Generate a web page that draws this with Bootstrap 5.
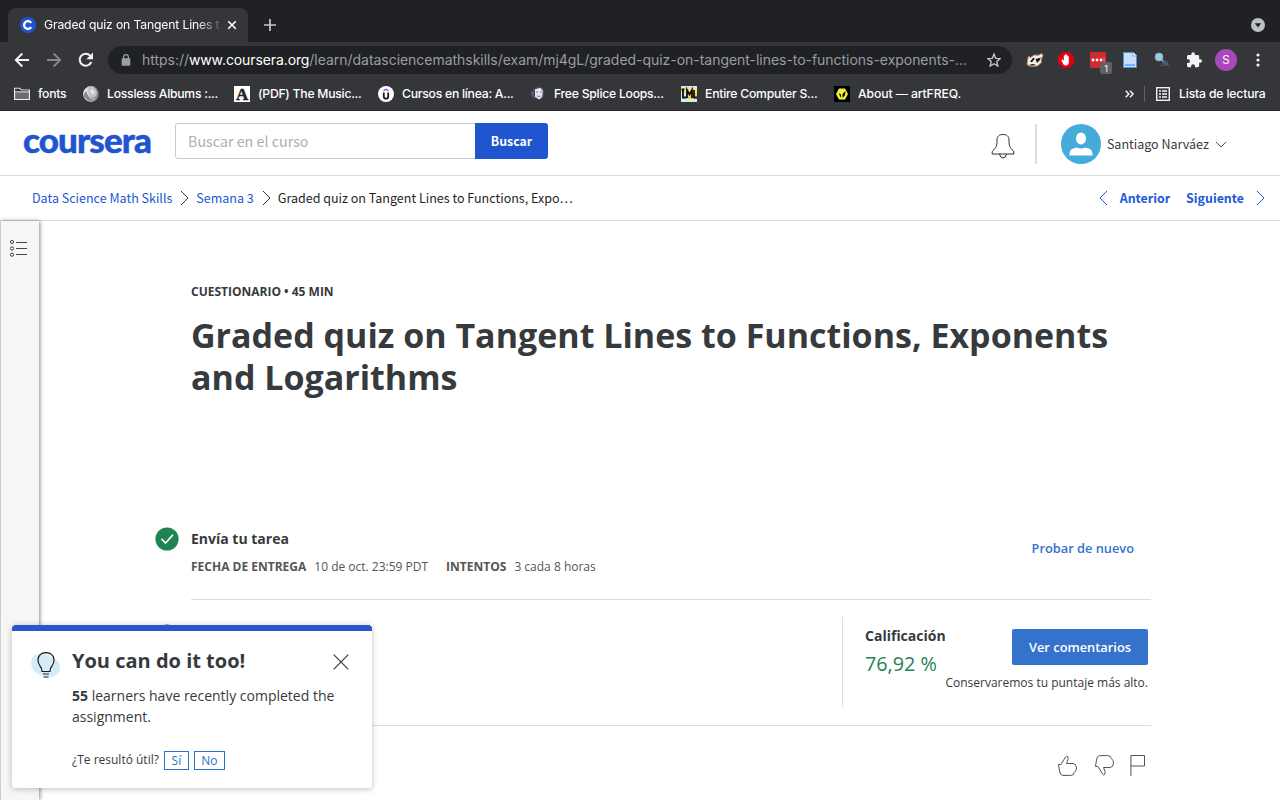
<!DOCTYPE html>
<html lang="es">
<head>
<meta charset="utf-8">
<meta name="viewport" content="width=device-width, initial-scale=1">
<title>Graded quiz on Tangent Lines to Functions, Exponents and Logarithms</title>
<link href="https://cdn.jsdelivr.net/npm/bootstrap@5.3.0/dist/css/bootstrap.min.css" rel="stylesheet">
<style>
body{height:800px;overflow:hidden;background:#fff;color:#373a3c;font-family:"Open Sans",sans-serif;font-size:14px;line-height:20px}
svg{display:block;flex:none}
span,a,strong{white-space:nowrap}
a{text-decoration:none}
/* browser chrome */
.chrome{height:111px;background:#35363a;color:#fff;font-family:Inter,"Liberation Sans",sans-serif;border-bottom:1px solid #242528}
.strip{height:42px;background:#202124;padding:8px 0 0 8px}
.tab{width:240px;height:34px;background:#35363a;border-radius:8px 8px 0 0;padding:0 10px 0 12px;font-size:12.2px;letter-spacing:-.15px}
.tab-name{width:177px;margin-left:8px;-webkit-mask-image:linear-gradient(90deg,#000 86%,transparent 102%)}
.tools{height:36px;padding-left:14px}
.omni{width:904px;height:28px;border-radius:14px;background:#202124;margin-left:13px;padding:0 11px 0 13px;font-size:14px;letter-spacing:-.035px;color:#9a9da1}
.omni b{color:#fff;font-weight:400;letter-spacing:-.1px}
.marks{height:32px;font-size:12.2px;font-weight:500;letter-spacing:-.25px}
.marks-grid{display:grid;grid-template-columns:69px 151px 144px 152px 151px 153px 140px;padding-left:14px}
.mk{gap:8px}
/* site header */
.src{font-family:"Noto Sans CJK SC",sans-serif}
.site{height:65px;border-bottom:1px solid #dedede;padding-left:23px}
.brandname{font-family:Lato,sans-serif;font-weight:900;font-size:35px;line-height:36px;letter-spacing:-.87px;color:#1f55cf;width:129px;-webkit-text-stroke:.5px #1f55cf}
.search{width:373px;height:36px;margin:12px 0 0 23px}
.search .form-control{border:1px solid #c7cad4;border-radius:3px 0 0 3px;font-size:14.3px;padding:0 12px 2px;height:36px;color:#b0b0b0}
.search .form-control::placeholder{color:#aeaeae}
.search .btn{width:73px;height:36px;background:#1f55cf;border:0;border-radius:0 3px 3px 0;padding:1px 0 0;font-size:12.3px;font-weight:700;color:#fff}
.crumbs{height:45px;border-bottom:1px solid #dedede;padding:0 15px 0 32px;font-size:12.53px;color:#1f1f1f}
.crumbs a{color:#2059d6}
/* page */
.rail{width:39px;height:579px;background:#f6f6f6;border-left:1px solid #cfcfcf;box-shadow:1px 0 4px rgba(0,0,0,.45);padding:18px 0 0 9px}
.main{margin-left:152px;width:960px}
h1{font-size:34px;line-height:42px;font-weight:700;margin:0;color:#373a3c}
.rule{height:1px;background:#dedede}
.meta{font-size:12px;line-height:18px;color:#555}
.stepmark{left:-36px;top:0}
.grade{border-left:1px solid #dedede;height:90px;padding-left:22px;width:309px}
.pct{font-size:19.8px;line-height:26px;color:#1f8354}
.btn-see{width:136px;height:36px;background:#3572cb;border:0;border-radius:2px;padding:1px 0 0;font-size:12.85px;font-weight:600;color:#fff}
.nudge{left:12px;top:625px;width:360px;height:163px;border-top:6px solid #2a55cb;border-radius:4px;background:#fff;box-shadow:0 1px 6px rgba(0,0,0,.25)}
.yn{border:1px solid #2a73cc;color:#2a73cc;font-size:12px;line-height:17px;height:19px;background:#fff;padding:0;text-align:center}
</style>
</head>
<body>
<header class="chrome">
  <div class="strip d-flex align-items-center">
    <div class="tab d-flex align-items-center">
      <svg width="16" height="16" viewBox="0 0 16 16"><circle cx="8" cy="8" r="8" fill="#1f55cf"/><path d="M11.2 5.8A3.9 3.9 0 1 0 11.2 10.2" fill="none" stroke="#fff" stroke-width="2.3"/></svg>
      <div class="tab-name"><span>Graded quiz on Tangent Lines t</span></div>
      <svg class="ms-auto" width="12" height="12" viewBox="0 0 12 12"><path d="M2.2 2.2l7.6 7.6M9.8 2.2L2.2 9.8" stroke="#fff" stroke-width="1.6"/></svg>
    </div>
    <svg class="ms-3" width="12" height="12" viewBox="0 0 12 12"><path d="M6 0v12M0 6h12" stroke="#c6c8cb" stroke-width="1.7"/></svg>
    <svg class="ms-auto" style="margin-right:15px" width="14" height="14" viewBox="0 0 14 14"><circle cx="7" cy="7" r="7" fill="#bdc1c6"/><path d="M3.8 5.2h6.4L7 9.6z" fill="#202124"/></svg>
  </div>
  <div class="tools d-flex align-items-center">
    <svg width="16" height="16" viewBox="0 0 16 16" fill="none" stroke="#f1f3f4" stroke-width="1.9"><path d="M15 8H2.5M8.300 1.500L1.800 8l6.500 6.500"/></svg>
    <svg style="margin-left:16px" width="16" height="16" viewBox="0 0 16 16" fill="none" stroke="#87888b" stroke-width="1.8"><path d="M1 8h12.500M7.700 1.500L14.200 8l-6.500 6.500"/></svg>
    <svg style="margin-left:15px" width="18" height="16" viewBox="0 0 18 16"><path d="M14.300 10A6 6 0 1 1 13.200 3.700L14.500 5" fill="none" stroke="#f1f3f4" stroke-width="2"/><path d="M16 .5v6.700H9.300z" fill="#f1f3f4"/></svg>
    <div class="omni d-flex align-items-center">
      <svg width="10" height="12" viewBox="0 0 10 12"><rect x=".7" y="4.200" width="8.600" height="7.500" rx="1" fill="#9a9fa5"/><path d="M2.600 5V3a2.400 2.400 0 0 1 4.800 0v2" fill="none" stroke="#9a9fa5" stroke-width="1.300"/></svg>
      <span style="margin-left:11px">https://<b>www.coursera.org</b>/learn/datasciencemathskills/exam/mj4gL/graded-quiz-on-tangent-lines-to-functions-exponents-...</span>
      <svg class="ms-auto" width="14" height="14" viewBox="0 0 14 14"><path d="M7 1l1.700 4.300 4.600.3-3.500 3 1.100 4.500L7 10.700l-3.900 2.400 1.100-4.500-3.500-3 4.600-.3z" fill="none" stroke="#c8cacd" stroke-width="1.300"/></svg>
    </div>
    <div class="d-flex align-items-center" style="margin-left:14px">
      <svg width="18" height="16" viewBox="0 0 18 16"><path d="M1.500 8.500L2.500 4l2 1.500L8 3l4.500.2L15.500 1.500l1.500 2-1.500 3.500-.3 4-4 3-7 .5L1 12.500z" fill="#f4efe7" stroke="#b97d51" stroke-width=".9"/><path d="M4 9.500l3-3.500 2 .3-3 4zM9.500 7l5.500-1.500-1.500 3-2.500 2.500zM3 12.700l4.500-.7 2.500 1-5 .8z" fill="#1b1b1b"/></svg>
      <svg style="margin-left:14px" width="16" height="16" viewBox="0 0 16 16"><path d="M4.700 0h6.600L16 4.700v6.600L11.300 16H4.700L0 11.300V4.700z" fill="#e1000f"/><path d="M4.500 7.500c1 0 .8 1.500 1.300 1.500V4c0-1 1.200-1 1.200 0V3c0-1.200 1.300-1.200 1.300 0v.6c0-1 1.300-1 1.300 0v1c0-.9 1.200-.9 1.200 0V10c0 2.500-1.200 3.500-3 3.500-2 0-2.500-1-4.200-4.800-.3-.7.300-1.200.9-1.200z" fill="#fff"/></svg>
      <div class="position-relative" style="margin-left:16px">
        <svg width="16" height="16" viewBox="0 0 16 16"><rect width="16" height="16" rx="1" fill="#d32a2f"/><circle cx="3" cy="8" r="1.400" fill="#fff"/><circle cx="7" cy="8" r="1.400" fill="#fff"/><circle cx="11" cy="8" r="1.400" fill="#fff"/><path d="M14 5.500v5" stroke="#e88"/></svg>
        <span class="position-absolute text-center" style="left:10px;top:10px;width:12px;height:12px;background:#5f6163;border-radius:2px;font-size:9px;line-height:13px">1</span>
      </div>
      <svg style="margin-left:17px" width="14" height="16" viewBox="0 0 14 16"><path d="M.5.500h9.500l3.500 3.500v11.500H.5z" fill="#c8def8" stroke="#4c93dd"/><path d="M10 0v4h4" fill="#fff" stroke="#4c93dd" stroke-width=".7"/><path d="M2 12h10v2H2z" fill="#76b2ed"/></svg>
      <svg style="margin-left:17px" width="16" height="16" viewBox="0 0 16 16"><path d="M7 7l3 3" stroke="#9aa" stroke-width="1.500"/><circle cx="5" cy="5" r="3.900" fill="#93cfe5" stroke="#8fb0c0"/><path d="M8 11l3-3 3.500 2.500-.5 2.500-4 .5z" fill="#465a80"/><path d="M6.500 13.500h3M13 13l2 1.500" stroke="#8a4b3d" stroke-width="1.200"/></svg>
      <svg style="margin-left:17px" width="15" height="16" viewBox="2 1 21 22"><path fill="#f1f3f4" d="M20.500 11H19V7c0-1.100-.9-2-2-2h-4V3.500a2.500 2.500 0 0 0-5 0V5H4c-1.100 0-2 .9-2 2v3.800h1.500a2.700 2.700 0 0 1 0 5.400H2V20c0 1.100.9 2 2 2h3.800v-1.500a2.700 2.700 0 0 1 5.400 0V22H17c1.100 0 2-.9 2-2v-4h1.500a2.500 2.500 0 0 0 0-5z"/></svg>
      <div class="rounded-circle text-center" style="margin-left:13px;width:22px;height:22px;background:#ab47bc;font-size:11.500px;line-height:22px">S</div>
      <svg style="margin-left:19px" width="4" height="14" viewBox="0 0 4 14" fill="#f1f3f4"><circle cx="2" cy="2" r="1.600"/><circle cx="2" cy="7" r="1.600"/><circle cx="2" cy="12" r="1.600"/></svg>
    </div>
  </div>
  <div class="marks d-flex align-items-center">
    <div class="marks-grid">
      <div class="mk d-flex align-items-center"><svg width="16" height="14" viewBox="0 0 16 14"><path d="M.6 12.500V1.200h5.200L7.300 3h8.100v9.500z" fill="#6b6c6f" stroke="#f1f3f4" stroke-width="1.100"/><path d="M1.200 1.800h4.300L7 3.600h7.800v1H1.200z" fill="#35363a"/><path d="M1 4.900h14" stroke="#f1f3f4" stroke-width=".9"/></svg><span>fonts</span></div>
      <div class="mk d-flex align-items-center"><svg width="16" height="16" viewBox="0 0 16 16"><defs><linearGradient id="g"><stop stop-color="#fff"/><stop offset="1" stop-color="#777"/></linearGradient></defs><circle cx="8" cy="8" r="7.900" fill="url(#g)"/><path d="M1 11q4 5 10 4Q5 12 3 5 0 8 1 11" fill="#888"/><ellipse cx="9.500" cy="6" rx="4" ry="5.500" transform="rotate(-30 9 6)" fill="#c5c5c5"/><ellipse cx="9.500" cy="6" rx="1.500" ry="2.500" transform="rotate(-30 9 6)" fill="#e8e8e8"/></svg><span>Lossless Albums :...</span></div>
      <div class="mk d-flex align-items-center"><svg width="16" height="16" viewBox="0 0 16 16"><rect width="16" height="16" fill="#fff"/><text x="8" y="13.500" text-anchor="middle" font-family="Liberation Serif" font-weight="700" font-size="17" fill="#222" stroke="#222" stroke-width=".5">A</text></svg><span>(PDF) The Music...</span></div>
      <div class="mk d-flex align-items-center"><svg width="16" height="16" viewBox="0 0 16 16"><circle cx="8" cy="8" r="8" fill="#fff"/><path d="M5.500 4.800L8 3.200l2.500 1.600" fill="none" stroke="#a435f0" stroke-width="1.300"/><path d="M5.800 6.500v4a2.200 2.200 0 0 0 4.400 0v-4" fill="none" stroke="#1c1d1f" stroke-width="1.800"/></svg><span>Cursos en línea: A...</span></div>
      <div class="mk d-flex align-items-center"><svg width="16" height="16" viewBox="0 0 16 16"><path d="M5 3l6-1.200L13 5l-.8 6-3 2.500L5 11z" fill="#e8e6ee"/><path d="M3 4q4-4 8-2.500L13.500 4v6l-2 3" fill="none" stroke="#4b4776" stroke-width="1.300"/><path d="M1 7q1-3 3-2v5l2 3q-4-1-5-6z" fill="#5a5690"/><path d="M6 6h2M10 6h2M7 10q2 1 3.500 0" stroke="#777" fill="none"/></svg><span>Free Splice Loops...</span></div>
      <div class="mk d-flex align-items-center"><svg width="16" height="16" viewBox="0 0 16 16"><rect width="16" height="16" fill="#cdeaf5"/><path d="M0 2h16v5H0z" fill="#f8e27a"/><path d="M6 7h10v6H6z" fill="#f3cf4c"/><path d="M.5 3.500h3M2 3.500v8h3.500M6 12V4l2.500 4.500L11 4v8M13 4v7.500h3" fill="none" stroke="#111" stroke-width="1.800"/></svg><span style="letter-spacing:-.22px">Entire Computer S...</span></div>
      <div class="mk d-flex align-items-center"><svg width="16" height="16" viewBox="0 0 16 16"><rect width="16" height="16" fill="#000"/><path d="M5 2.500h6l3 5.500-3 5.500H5L2 8z" fill="#f3f23a"/><path d="M4.500 7l2.500 1.500v3.500zM8.500 8l3-3-.5 4-2.500 3z" fill="#000"/></svg><span style="letter-spacing:-.1px">About — artFREQ.</span></div>
    </div>
    <svg style="margin-left:151px" width="9" height="8" viewBox="0 0 9 8"><path d="M.8 .8L3.800 4l-3 3.200M5 .8L8 4 5 7.200" fill="none" stroke="#f1f3f4" stroke-width="1.500"/></svg>
    <div style="width:1px;height:16px;background:#626367;margin:0 11px 0 10px"></div>
    <svg width="14" height="14" viewBox="0 0 14 14"><rect x=".7" y=".7" width="12.600" height="12.600" fill="none" stroke="#f1f3f4" stroke-width="1.400"/><path d="M3 4h2M3 7h2M3 10h2M6 4h5M6 7h5M6 10h5" stroke="#f1f3f4" stroke-width="1.400"/></svg>
    <span style="margin-left:9px;letter-spacing:-.16px">Lista de lectura</span>
  </div>
</header>

<div class="site src d-flex align-items-start">
  <div class="brandname" style="margin-top:10px"><span>coursera</span></div>
  <div class="search input-group flex-nowrap">
    <input class="form-control src" type="text" placeholder="Buscar en el curso" aria-label="Buscar">
    <button class="btn src"><span>Buscar</span></button>
  </div>
  <div class="ms-auto d-flex align-items-center" style="margin-top:13px;padding-right:53px">
    <svg style="margin-top:4px" width="24" height="26" viewBox="0 0 24 26" fill="none" stroke="#2c2f36"><path d="M1.200 21v-2.500C4 16 6 13.500 6 9.500V7c0-4 2.500-5.500 6-5.500S18 3 18 7v2.500c0 4 2 6.500 4.800 9V21z"/><path d="M8.500 21q.5 4 3.500 4t3.500-4"/></svg>
    <div style="width:2px;height:40px;background:#dedede;margin:0 24px 0 20px"></div>
    <svg width="40" height="40" viewBox="0 0 40 40"><circle cx="20" cy="20" r="20" fill="#43acd9"/><ellipse cx="20" cy="14.500" rx="5" ry="6" fill="#fff"/><path d="M8.500 31.500c0-5.500 1.500-7 7.500-8q4 2 8 0c6 1 7.500 2.500 7.500 8z" fill="#fff"/></svg>
    <span style="margin-left:6px;font-size:12.530px">Santiago Narváez</span>
    <svg style="margin-left:6px" width="12" height="7" viewBox="0 0 12 7"><path d="M1 1l5 5 5-5" fill="none" stroke="#555"/></svg>
  </div>
</div>
<nav class="crumbs src d-flex align-items-center">
  <a href="#">Data Science Math Skills</a>
  <svg style="margin:0 7px 0 8px" width="9" height="16" viewBox="0 0 9 16"><path d="M1 1l7 7-7 7" fill="none" stroke="#333"/></svg>
  <a href="#">Semana 3</a>
  <svg style="margin:0 7px 0 8px" width="9" height="16" viewBox="0 0 9 16"><path d="M1 1l7 7-7 7" fill="none" stroke="#333"/></svg>
  <span>Graded quiz on Tangent Lines to Functions, Expo…</span>
  <svg class="ms-auto" width="9" height="16" viewBox="0 0 9 16"><path d="M8 1L1 8l7 7" fill="none" stroke="#2059d6"/></svg>
  <a href="#" class="fw-bold" style="margin-left:12px;font-size:12.400px">Anterior</a>
  <a href="#" class="fw-bold" style="margin:0 12px 0 16px;font-size:12.400px">Siguiente</a>
  <svg width="9" height="16" viewBox="0 0 9 16"><path d="M1 1l7 7-7 7" fill="none" stroke="#2059d6"/></svg>
</nav>

<div class="d-flex">
  <aside class="rail">
    <svg width="18" height="19" viewBox="0 0 18 19" fill="none" stroke="#444"><circle cx="2" cy="3" r="1.600"/><circle cx="2" cy="9.500" r="1.600"/><circle cx="2" cy="15.700" r="1.600"/><path d="M6 3.500h11M6 9.500h11M6 15.500h11"/></svg>
  </aside>
  <main class="main">
    <div class="fw-bold" style="padding-top:61px;font-size:12px"><span>CUESTIONARIO • 45 MIN</span></div>
    <h1 style="margin-top:12px"><span>Graded quiz on Tangent Lines to Functions, Exponents</span><br><span>and Logarithms</span></h1>
    <section class="d-flex position-relative" style="margin-top:129px;height:72px">
      <svg class="position-absolute stepmark" width="24" height="24" viewBox="0 0 24 24"><circle cx="12" cy="12" r="11.600" fill="#1f8354"/><path d="M6.500 11.800l4 4.200 7.500-8.200" fill="none" stroke="#fff" stroke-width="1.700"/></svg>
      <div>
        <div class="fw-bold" style="margin-top:2px"><span>Envía tu tarea</span></div>
        <div class="meta" style="margin-top:9px"><strong>FECHA DE ENTREGA</strong><span style="margin-left:8px">10 de oct. 23:59 PDT</span><strong style="margin-left:18px">INTENTOS</strong><span style="margin-left:8px">3 cada 8 horas</span></div>
      </div>
      <a href="#" class="ms-auto" style="margin:11px 17px 0 0;color:#3572cb;font-weight:600;font-size:12.800px">Probar de nuevo</a>
    </section>
    <div class="rule"></div>
    <section class="d-flex position-relative" style="height:125px;padding-top:17px">
      <svg class="position-absolute stepmark" style="top:24px" width="24" height="24" viewBox="0 0 24 24"><circle cx="12" cy="12" r="11.600" fill="#1f8354"/></svg>
      <div class="grade ms-auto d-flex">
        <div style="width:80px;padding-top:9px">
          <div class="fw-bold"><span>Calificación</span></div>
          <div class="pct" style="margin-top:5px"><span>76,92 %</span></div>
        </div>
        <div class="text-end" style="width:203px;padding-top:12px">
          <button class="btn btn-see"><span>Ver comentarios</span></button>
          <div style="font-size:12px;margin-top:8px"><span>Conservaremos tu puntaje más alto.</span></div>
        </div>
      </div>
    </section>
    <div class="rule"></div>
    <div class="d-flex justify-content-end align-items-center" style="margin-top:29px;padding-right:5px">
      <svg width="20" height="21" viewBox="0 0 20 21" fill="none" stroke="#50545a"><path d="M1.500 9.500H4L8.500 2Q9.800.2 11 2v2.500L9.500 8.500h6.700q3.300.5 3.300 4.500 0 3-2.200 4.500-.5 2.900-3.500 2.900H5.500Q3 20 2.500 16z"/></svg>
      <svg style="margin:0 16px 0 17px" width="20" height="21" viewBox="0 0 20 21" fill="none" stroke="#50545a"><path d="M1.500 11.500H4L8.500 19q1.300 1.800 2.500 0v-2.500L9.500 12.500h6.700q3.300-.5 3.300-4.500 0-3-2.200-4.500Q16.800.6 13.800.6H5.500Q3 1 2.500 5z"/></svg>
      <svg width="16" height="21" viewBox="0 0 16 21" fill="none" stroke="#50545a"><path d="M.9 21V.5h13.600v10.500H.9"/></svg>
    </div>
  </main>
</div>

<aside class="nudge position-absolute">
  <div class="d-flex" style="padding:17px 23px 0 18px">
    <svg style="margin-top:2px" width="32" height="32" viewBox="0 0 32 32"><path d="M2 8C5 2 16 3 22 8c5 1 9 5 8 11s-8 10-15 8C8 25 4 22 2 18 1 15 1 11 2 8z" fill="#d5ecf8"/><path d="M12 21.500q.3-3-2-5.500c-1.500-2-2-3.500-2-6q.5-7 8-7.300 7.500.3 8 7.300c0 2.500-.5 4-2 6q-2.300 2.500-2 5.500zM13 24h6M13.500 27h5" fill="none" stroke="#1f1f1f" stroke-width="1.200"/></svg>
    <div style="margin-left:10px;width:261px">
      <div class="fw-bold" style="font-size:20px;line-height:26px"><span>You can do it too!</span></div>
      <div style="margin-top:11px;margin-right:-10px;line-height:21px"><strong>55</strong><span> learners have recently completed the</span><br><span>assignment.</span></div>
      <div class="d-flex align-items-center" style="margin-top:23px;font-size:12px"><span>¿Te resultó útil?</span><button class="yn" style="width:25px;margin-left:5px">Sí</button><button class="yn" style="width:31px;margin-left:5px">No</button></div>
    </div>
    <svg style="margin-top:6px" width="16" height="16" viewBox="0 0 16 16"><path d="M.7 .7l14.600 14.600M15.300 .7L.7 15.300" stroke="#333" stroke-width="1.100"/></svg>
  </div>
</aside>
<script src="https://cdn.jsdelivr.net/npm/bootstrap@5.3.0/dist/js/bootstrap.bundle.min.js"></script>
</body>
</html>
